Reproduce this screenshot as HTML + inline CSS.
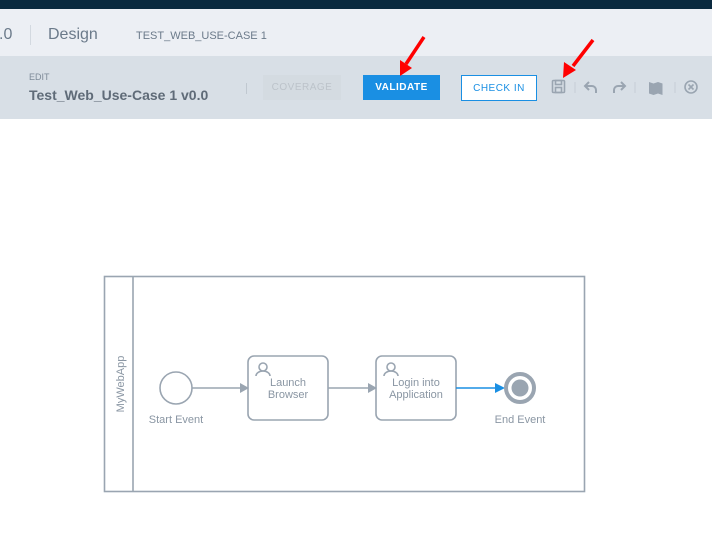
<!DOCTYPE html>
<html><head><style>
body{margin:0;width:712px;height:545px;overflow:hidden;background:#fff;font-family:"Liberation Sans",sans-serif;position:relative}
.a{position:absolute;white-space:nowrap}
</style></head><body>
<div class="a" style="left:0;top:0;width:712px;height:9px;background:#0a2a3f"></div>
<div class="a" style="left:0;top:9px;width:712px;height:47px;background:#eceff4"></div>
<div class="a" style="left:0;top:56px;width:712px;height:63px;background:#d8dfe6"></div>
<div class="a" style="left:-1px;top:26px;font-size:16px;color:#6b7a8a">.0</div>
<div class="a" style="left:30px;top:25px;width:1px;height:20px;background:#d3d9e0"></div>
<div class="a" style="left:48px;top:26px;font-size:16px;color:#6b7a8a">Design</div>
<div class="a" style="left:136px;top:30px;font-size:11px;color:#6b7a8a">TEST_WEB_USE-CASE 1</div>
<div class="a" style="left:29px;top:72px;font-size:9px;color:#7d8a98">EDIT</div>
<div class="a" style="left:29px;top:87px;font-size:14px;font-weight:bold;color:#5f6b78">Test_Web_Use-Case 1 v0.0</div>
<div class="a" style="left:246px;top:83px;width:1px;height:11px;background:#c0c8d0"></div>
<div class="a" style="left:263px;top:75px;width:78px;height:25px;background:#d4dbe1;color:#bcc3ca;font-size:10px;letter-spacing:0.5px;text-align:center;line-height:25px">COVERAGE</div>
<div class="a" style="left:363px;top:75px;width:77px;height:25px;background:#1a8fe3;color:#fff;font-size:10px;font-weight:bold;letter-spacing:0.5px;text-align:center;line-height:25px">VALIDATE</div>
<div class="a" style="left:461px;top:75px;width:74px;height:24px;background:#fff;border:1px solid #1a8fe3;color:#1a8fe3;font-size:10px;letter-spacing:0.5px;text-align:center;line-height:25px">CHECK IN</div>
<svg class="a" style="left:0;top:0" width="712" height="545">
<g fill="none" stroke="#9aa5b1" stroke-width="1.6">
<rect x="552.5" y="80.5" width="12" height="12" rx="1"/><rect x="555.5" y="80.5" width="6" height="4"/><rect x="555.5" y="87.5" width="6" height="5"/>
<path d="M596 93v-3a4 4 0 0 0-4-4h-6M589 82l-4 4 4 4" stroke-width="2"/>
<path d="M614 93v-3a4 4 0 0 1 4-4h6M621 82l4 4-4 4" stroke-width="2"/>
<circle cx="691" cy="87" r="6"/><path d="M688.5 84.5l5 5M693.5 84.5l-5 5"/>
</g>
<path d="M649 82l4.5 1.5 4.5-1.5 4.5 1.5v11.5l-4.5-1.5-4.5 1.5-4.5-1.5z" fill="#9aa5b1"/>
<g stroke="#c6ced6"><path d="M575 82v11M635 82v11M675 82v11"/></g>
<g stroke="#f00" stroke-width="3.5" fill="#f00"><path d="M424 37L406 64"/><path d="M593 40L573 66"/></g>
<path d="M400 76l0-16 12 8z" fill="#f00"/><path d="M563 78l1-16 12 8z" fill="#f00"/>
<g fill="none" stroke="#9aa5b1" stroke-width="1.6">
<rect x="104.5" y="276.5" width="480" height="215"/><path d="M133 277v214"/>
<circle cx="176" cy="388" r="16"/>
<rect x="248" y="356" width="80" height="64" rx="6"/>
<rect x="376" y="356" width="80" height="64" rx="6"/>
<path d="M192 388h48M328 388h40"/>
<circle cx="263" cy="367" r="4"/><path d="M256 376a7 5 0 0 1 14 0"/>
<circle cx="391" cy="367" r="4"/><path d="M384 376a7 5 0 0 1 14 0"/>
</g>
<path d="M240 383l9 5-9 5z M368 383l9 5-9 5z" fill="#9aa5b1"/>
<path d="M456 388h40" stroke="#1a8fe3" stroke-width="1.6"/><path d="M495 383l10 5-10 5z" fill="#1a8fe3"/>
<circle cx="520" cy="388" r="14" fill="none" stroke="#9aa5b1" stroke-width="4"/><circle cx="520" cy="388" r="8.5" fill="#9aa5b1"/>
<g font-family="Liberation Sans,sans-serif" font-size="11" fill="#8a96a3" text-anchor="middle">
<text x="176" y="423">Start Event</text><text x="520" y="423">End Event</text>
<text x="288" y="386">Launch</text><text x="288" y="398">Browser</text>
<text x="416" y="386">Login into</text><text x="416" y="398">Application</text>
<text transform="translate(124 384) rotate(-90)">MyWebApp</text>
</g>
</svg>
</body></html>
